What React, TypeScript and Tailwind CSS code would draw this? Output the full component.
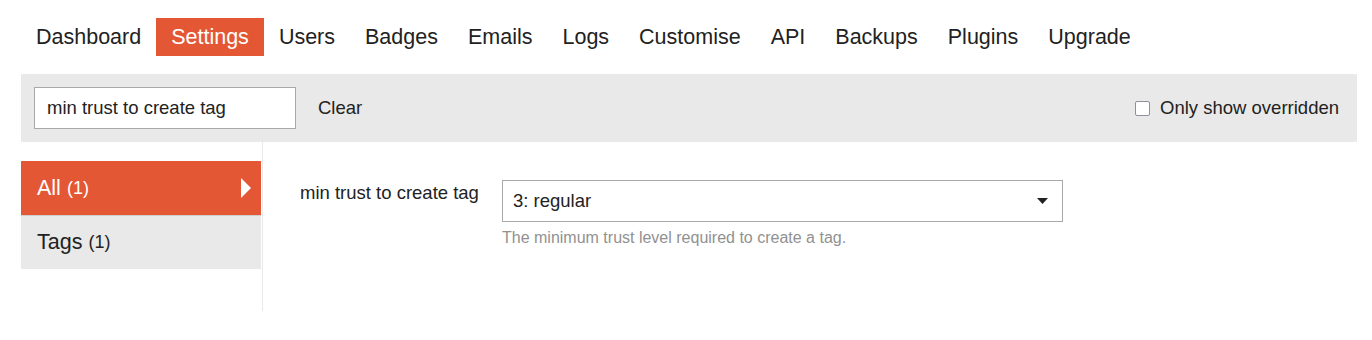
const NAV = ["Dashboard", "Settings", "Users", "Badges", "Emails", "Logs", "Customise", "API", "Backups", "Plugins", "Upgrade"];

export default function App() {
  return (
    <div className="min-h-[340px] bg-white text-[#222]" style={{ fontFamily: "'Liberation Sans', Arial, sans-serif" }}>
      <div className="px-[21px] pt-[18px]">
        {/* Top nav */}
        <nav className="flex">
          {NAV.map((n) => (
            <a
              key={n}
              className={`h-[38px] px-[15px] flex items-center text-[21.5px] ${n === "Settings" ? "bg-[#e45735] text-white" : "text-[#222]"}`}
            >
              {n}
            </a>
          ))}
        </nav>

        {/* Filter bar */}
        <div className="mt-[18px] mr-[-6px] h-[68px] bg-[#e9e9e9] flex items-center pl-[13px] pr-[18px]">
          <div className="w-[262px] h-[42px] bg-white border border-[#a9a9a9] flex items-center px-[12px] text-[18.5px] text-[#222]">
            min trust to create tag
          </div>
          <span className="ml-[22px] text-[18.5px] text-[#222]">Clear</span>
          <label className="ml-auto flex items-center text-[18.5px] text-[#222]">
            <span className="w-[15px] h-[15px] border border-[#8f8f9d] rounded-[2px] bg-white mr-[10px]" />
            Only show overridden
          </label>
        </div>

        {/* Body */}
        <div className="flex">
          <div className="w-[241px] pt-[19px] border-r border-[#e9e9e9] h-[150px] box-content">
            <div className="w-[240px] h-[55px] bg-[#e45735] text-white flex items-center pl-[16px] pr-[10px] border-b border-[#cfcfcf]">
              <span className="text-[21.5px]">All</span>
              <span className="ml-[6px] text-[18px]">(1)</span>
              <svg className="ml-auto" width="10" height="20" viewBox="0 0 10 20">
                <path d="M0 0 L10 10 L0 20 Z" fill="#fff" />
              </svg>
            </div>
            <div className="w-[240px] h-[53px] bg-[#e9e9e9] flex items-center pl-[16px]">
              <span className="text-[21.5px]">Tags</span>
              <span className="ml-[6px] text-[18px]">(1)</span>
            </div>
          </div>

          <div className="pl-[37px] pt-[38px] flex">
            <div className="w-[202px] mt-[-1px] text-[18.5px] text-[#222]">min trust to create tag</div>
            <div>
              <div className="w-[561px] h-[42px] border border-[#a9a9a9] bg-white flex items-center pl-[10px] pr-[14px] text-[18.5px] text-[#222]">
                3: regular
                <svg className="ml-auto" width="11" height="6" viewBox="0 0 11 6">
                  <path d="M0 0 L11 0 L5.5 6 Z" fill="#222" />
                </svg>
              </div>
              <div className="mt-[4px] text-[16px] text-[#919191]">The minimum trust level required to create a tag.</div>
            </div>
          </div>
        </div>
      </div>
    </div>
  );
}
